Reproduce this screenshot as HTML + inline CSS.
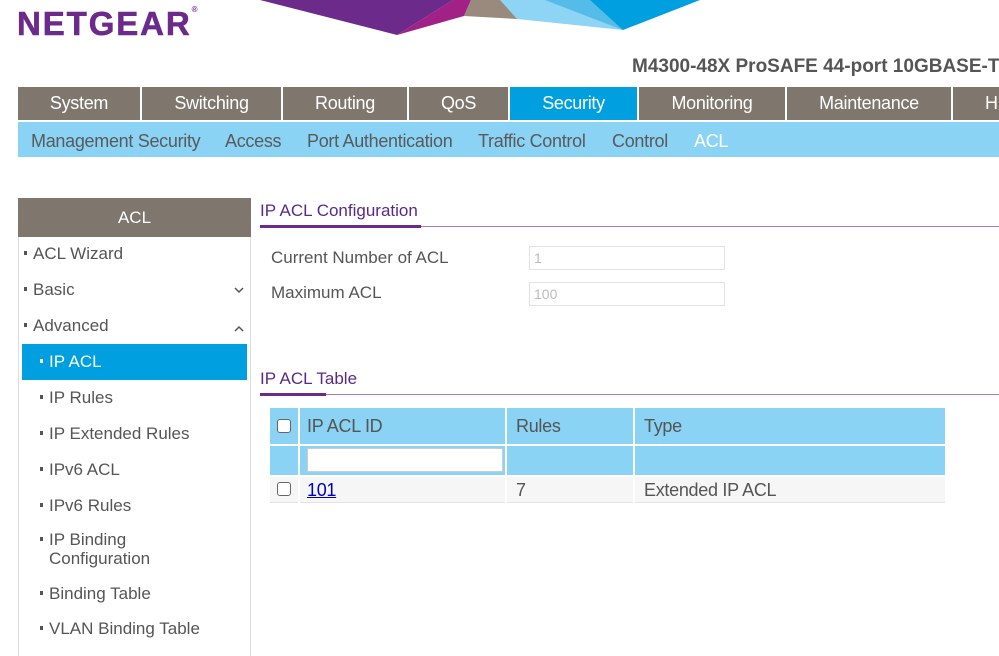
<!DOCTYPE html>
<html><head><meta charset="utf-8"><style>
*{margin:0;padding:0;box-sizing:border-box}
body{width:999px;height:656px;overflow:hidden;background:#fff;font-family:"Liberation Sans",sans-serif;position:relative;color:#555}
.a{position:absolute;white-space:nowrap}
.n{letter-spacing:-0.3px}
.tab{position:absolute;top:87px;height:33px;background:#7f766d;color:#fff;font-size:18px;text-align:center;line-height:33px}
.sub{position:absolute;top:131px;font-size:18px;color:#5a5a5a}
.si{position:absolute;font-size:17px;color:#555;left:24px}
.si2{position:absolute;font-size:17px;color:#555;left:40px}
.b{display:inline-block;width:3px;height:4px;background:#555;vertical-align:middle;margin-right:6px;position:relative;top:-2px}
.inp{position:absolute;left:529px;width:196px;height:24px;border:1px solid #e3e3e3;font-size:14px;color:#bbb;padding-left:4px;line-height:22px}
.cb{position:absolute;width:14px;height:14px;border:1.5px solid #666;border-radius:3px;background:#fff;left:277px}
</style></head><body>
<svg class="a" style="left:0;top:0" width="999" height="40">
<polygon points="260,0 453,0 397,35" fill="#6c2a8a"/>
<polygon points="453,0 471,0 464,16 397,35" fill="#a12187"/>
<polygon points="471,0 510,0 517,19 464,16" fill="#9a8a7d"/>
<polygon points="500,0 560,0 623,30 517,19" fill="#8dd4f5"/>
<polygon points="545,0 595,0 623,30" fill="#55bce9"/>
<polygon points="590,0 700,0 623,30" fill="#009fdf"/>
</svg>
<div class="a" style="left:17px;top:5px;font-size:33px;font-weight:bold;color:#6c2a8a;letter-spacing:1.9px;-webkit-text-stroke:0.6px #6c2a8a">NETGEAR<span style="font-size:8px;vertical-align:top;letter-spacing:0;-webkit-text-stroke:0">®</span></div>
<div class="a" style="left:632px;top:56px;font-size:19px;font-weight:bold;color:#555">M4300-48X ProSAFE 44-port 10GBASE-T</div>
<div class="tab n" style="left:18px;width:122px">System</div>
<div class="tab n" style="left:142px;width:139px">Switching</div>
<div class="tab n" style="left:283px;width:124px">Routing</div>
<div class="tab n" style="left:409px;width:99px">QoS</div>
<div class="tab n" style="left:510px;width:127px;background:#009fdf">Security</div>
<div class="tab n" style="left:639px;width:146px">Monitoring</div>
<div class="tab n" style="left:787px;width:164px">Maintenance</div>
<div class="tab n" style="left:953px;width:60px;text-align:left;padding-left:32px">H</div>
<div class="a" style="left:18px;top:122px;width:981px;height:35px;background:#8ad3f4"></div>
<div class="sub n" style="left:31px">Management Security</div>
<div class="sub n" style="left:225px">Access</div>
<div class="sub n" style="left:307px">Port Authentication</div>
<div class="sub n" style="left:478px">Traffic Control</div>
<div class="sub n" style="left:612px">Control</div>
<div class="sub n" style="left:694px;color:#fff">ACL</div>

<div class="a" style="left:18px;top:198px;width:233px;height:458px;border-left:1px solid #ddd;border-right:1px solid #ddd"></div>
<div class="a" style="left:18px;top:198px;width:233px;height:39px;background:#7f766d;color:#fff;font-size:17px;text-align:center;line-height:39px">ACL</div>
<div class="si" style="top:244px"><span class="b"></span>ACL Wizard</div>
<div class="si" style="top:280px"><span class="b"></span>Basic</div>
<div class="si" style="top:316px"><span class="b"></span>Advanced</div>
<svg class="a" style="left:233px;top:286px" width="12" height="50"><path d="M2 2 L6 6 L10 2" stroke="#555" stroke-width="1.5" fill="none"/><path d="M2 45 L6 41 L10 45" stroke="#555" stroke-width="1.5" fill="none"/></svg>
<div class="a" style="left:22px;top:344px;width:225px;height:36px;background:#009fdf"></div>
<div class="si2" style="top:352px;color:#fff"><span class="b" style="background:#fff"></span>IP ACL</div>
<div class="si2" style="top:388px"><span class="b"></span>IP Rules</div>
<div class="si2" style="top:424px"><span class="b"></span>IP Extended Rules</div>
<div class="si2" style="top:460px"><span class="b"></span>IPv6 ACL</div>
<div class="si2" style="top:496px"><span class="b"></span>IPv6 Rules</div>
<div class="si2" style="top:530px;line-height:19px;white-space:normal"><span class="b"></span>IP Binding<br><span style="padding-left:9px">Configuration</span></div>
<div class="si2" style="top:584px"><span class="b"></span>Binding Table</div>
<div class="si2" style="top:619px"><span class="b"></span>VLAN Binding Table</div>

<div class="a" style="left:260px;top:201px;font-size:17px;color:#5b2a86">IP ACL Configuration</div>
<div class="a" style="left:260px;top:226px;width:739px;height:1px;background:#a77fc0"></div>
<div class="a" style="left:260px;top:225px;width:161px;height:3px;background:#6c2a8a"></div>
<div class="a" style="left:271px;top:248px;font-size:17px">Current Number of ACL</div>
<div class="a" style="left:271px;top:283px;font-size:17px">Maximum ACL</div>
<div class="inp" style="top:246px">1</div>
<div class="inp" style="top:282px">100</div>

<div class="a" style="left:260px;top:369px;font-size:17px;color:#5b2a86">IP ACL Table</div>
<div class="a" style="left:260px;top:394px;width:739px;height:1px;background:#a77fc0"></div>
<div class="a" style="left:260px;top:393px;width:66px;height:3px;background:#6c2a8a"></div>
<div class="a" style="left:270px;top:408px;width:675px;height:67px;background:#8ad3f4"></div>
<div class="a" style="left:270px;top:444px;width:675px;height:2px;background:#fff"></div>
<div class="a" style="left:270px;top:475px;width:675px;height:28px;background:#f6f6f6;border-bottom:1px solid #e3e3e3;border-top:2px solid #fff"></div>
<div class="a" style="left:298px;top:408px;width:2px;height:95px;background:#fff"></div>
<div class="a" style="left:505px;top:408px;width:2px;height:95px;background:#fff"></div>
<div class="a" style="left:633px;top:408px;width:2px;height:95px;background:#fff"></div>
<div class="cb" style="top:419px"></div>
<div class="cb" style="top:482px"></div>
<div class="a n" style="left:307px;top:416px;font-size:18px;color:#555">IP ACL ID</div>
<div class="a n" style="left:516px;top:416px;font-size:18px;color:#555">Rules</div>
<div class="a n" style="left:644px;top:416px;font-size:18px;color:#555">Type</div>
<div class="a" style="left:307px;top:448px;width:196px;height:24px;background:#fff;border:1px solid #ccc"></div>
<div class="a n" style="left:307px;top:480px;font-size:18px;color:#00c;text-decoration:underline">101</div>
<div class="a n" style="left:516px;top:480px;font-size:18px;color:#555">7</div>
<div class="a n" style="left:644px;top:480px;font-size:18px;color:#555">Extended IP ACL</div>
</body></html>
